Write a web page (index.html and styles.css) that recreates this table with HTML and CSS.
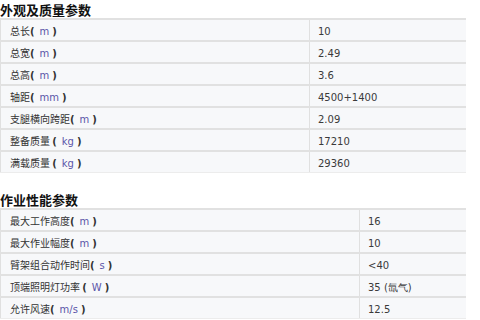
FILE: index.html
```html
<!DOCTYPE html>
<html>
<head>
<meta charset="utf-8">
<link rel="stylesheet" href="styles.css">
</head>
<body>
<h3 class="title">外观及质量参数</h3>
<table class="spec spec-a">
<tr><td class="k">总长<span class="p">(</span><span class="u">m</span><span class="p">)</span></td><td class="v">10</td></tr>
<tr><td class="k">总宽<span class="p">(</span><span class="u">m</span><span class="p">)</span></td><td class="v">2.49</td></tr>
<tr><td class="k">总高<span class="p">(</span><span class="u">m</span><span class="p">)</span></td><td class="v">3.6</td></tr>
<tr><td class="k">轴距<span class="p">(</span><span class="u">mm</span><span class="p">)</span></td><td class="v">4500+1400</td></tr>
<tr><td class="k">支腿横向跨距<span class="p">(</span><span class="u">m</span><span class="p">)</span></td><td class="v">2.09</td></tr>
<tr><td class="k">整备质量 <span class="p">(</span><span class="u">kg</span><span class="p">)</span></td><td class="v">17210</td></tr>
<tr><td class="k">满载质量 <span class="p">(</span><span class="u">kg</span><span class="p">)</span></td><td class="v">29360</td></tr>
</table>
<h3 class="title second">作业性能参数</h3>
<table class="spec spec-b">
<tr><td class="k">最大工作高度<span class="p">(</span><span class="u">m</span><span class="p">)</span></td><td class="v">16</td></tr>
<tr><td class="k">最大作业幅度<span class="p">(</span><span class="u">m</span><span class="p">)</span></td><td class="v">10</td></tr>
<tr><td class="k">臂架组合动作时间<span class="p">(</span><span class="u">s</span><span class="p">)</span></td><td class="v">&lt;40</td></tr>
<tr><td class="k">顶端照明灯功率 <span class="p">(</span><span class="u">W</span><span class="p">)</span></td><td class="v">35 (氙气)</td></tr>
<tr><td class="k">允许风速<span class="p">(</span><span class="u">m/s</span><span class="p">)</span></td><td class="v">12.5</td></tr>
</table>
</body>
</html>
```
FILE: styles.css
```css
html, body {
  margin: 0;
  padding: 0;
  background: #ffffff;
}
body {
  font-family: "Noto Sans CJK SC", "DejaVu Sans", sans-serif;
  color: #333;
  font-size: 10px;
}
.title {
  margin: 0;
  height: 18px;
  line-height: 19px;
  font-size: 13px;
  font-weight: bold;
  color: #111;
}
.title.second {
  margin-top: 17px;
}
.spec {
  width: 466px;
  border-collapse: collapse;
  table-layout: fixed;
}
.spec td {
  height: 17px;
  padding: 2px 0 0 0;
  background: #f7f8fa;
  border-top: 2px solid #e1e1e1;
  border-bottom: 1px solid #ececec;
  border-left: 1px solid #e0e0e0;
  vertical-align: middle;
  line-height: 17px;
}
.spec td.k {
  padding-left: 9px;
  font-size: 10px;
  color: #333;
}
.spec td.v {
  padding-left: 8px;
  font-family: "DejaVu Sans", sans-serif;
  font-size: 10px;
  color: #3a3a3a;
}
.spec-a td.k { width: 299px; }
.spec-b td.k { width: 349px; }
.p {
  font-family: "DejaVu Sans", sans-serif;
  font-weight: bold;
  color: #333;
}
.u {
  font-family: "DejaVu Sans", sans-serif;
  color: #5a55a8;
  margin: 0 3px 0 5px;
}
```
